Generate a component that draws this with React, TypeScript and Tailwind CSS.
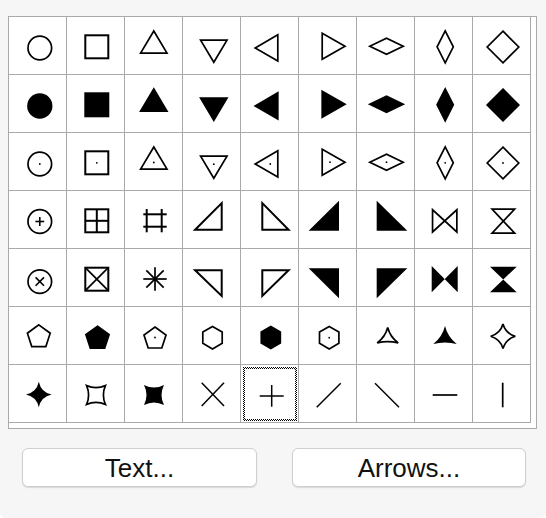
import React from "react";

type P = [number, number];
const pts = (a: P[]) => a.map((p) => `${p[0]},${p[1]}`).join(" ");
const SW = 1.7;

function regular(cx: number, cy: number, R: number, n: number, start: number): P[] {
  const out: P[] = [];
  for (let i = 0; i < n; i++) {
    const a = ((start + (360 / n) * i) * Math.PI) / 180;
    out.push([cx + R * Math.cos(a), cy + R * Math.sin(a)]);
  }
  return out;
}

function concavePts(p: P[], c: P, k: number) {
  const n = p.length;
  let d = `M${p[0][0]},${p[0][1]}`;
  for (let i = 0; i < n; i++) {
    const a = p[i];
    const b = p[(i + 1) % n];
    const mx = (a[0] + b[0]) / 2;
    const my = (a[1] + b[1]) / 2;
    const q: P = [c[0] + k * (mx - c[0]), c[1] + k * (my - c[1])];
    d += ` Q${q[0]},${q[1]} ${b[0]},${b[1]}`;
  }
  return d + " Z";
}

function concaveStar(cx: number, cy: number, R: number, n: number, start: number, k: number) {
  return concavePts(regular(cx, cy, R, n, start), [cx, cy], k);
}

function concaveSquare(x1: number, y1: number, x2: number, y2: number, inset: number) {
  const mx = (x1 + x2) / 2;
  const my = (y1 + y2) / 2;
  return `M${x1},${y1} Q${mx},${y1 + inset} ${x2},${y1} Q${x2 - inset},${my} ${x2},${y2} Q${mx},${y2 - inset} ${x1},${y2} Q${x1 + inset},${my} ${x1},${y1} Z`;
}

const Dot = ({ x, y }: { x: number; y: number }) => <circle cx={x} cy={y} r={0.9} fill="#000" />;

const Out = ({ p, w = SW }: { p: P[]; w?: number }) => (
  <polygon points={pts(p)} fill="none" stroke="#000" strokeWidth={w} strokeLinejoin="miter" strokeMiterlimit={10} />
);
const Fill = ({ p }: { p: P[] }) => (
  <polygon points={pts(p)} fill="#000" stroke="#000" strokeWidth={SW} strokeLinejoin="miter" strokeMiterlimit={10} />
);
const FillOnly = ({ p }: { p: P[] }) => <polygon points={pts(p)} fill="#000" />;
const Ln = ({ a, b, w = 1.6 }: { a: P; b: P; w?: number }) => (
  <line x1={a[0]} y1={a[1]} x2={b[0]} y2={b[1]} stroke="#000" strokeWidth={w} />
);

const triUp: P[] = [[28.8, 14], [15.6, 36.1], [42, 36.1]];
const triDown: P[] = [[17.6, 23.2], [44, 23.2], [30.8, 45.3]];
const triLeft: P[] = [[14.2, 31], [36.8, 17.8], [36.8, 44]];
const triRight: P[] = [[23.2, 16.2], [46, 29.2], [23.2, 42.2]];
const diaH: P[] = [[12.8, 29.2], [29.5, 21.2], [46.2, 29.2], [29.5, 37.2]];
const diaV: P[] = [[30.2, 13.8], [38.3, 29.8], [30.2, 45.8], [22.1, 29.8]];
const diaS: P[] = [[30, 14.2], [45.8, 30], [30, 45.8], [14.2, 30]];

const row0 = [
  <circle key="c" cx={30.8} cy={31} r={11.8} fill="none" stroke="#000" strokeWidth={SW} />,
  <rect key="r" x={18.3} y={18.3} width={23} height={23} fill="none" stroke="#000" strokeWidth={2} />,
  <Out key="a" p={triUp} />,
  <Out key="b" p={triDown} />,
  <Out key="c2" p={triLeft} />,
  <Out key="d" p={triRight} />,
  <Out key="e" p={diaH} />,
  <Out key="f" p={diaV} />,
  <Out key="g" p={diaS} />,
];

const row1 = [
  <circle key="c" cx={30.8} cy={31} r={11.8} fill="#000" stroke="#000" strokeWidth={SW} />,
  <rect key="r" x={18.3} y={18.3} width={23} height={23} fill="#000" stroke="#000" strokeWidth={2} />,
  <Fill key="a" p={triUp} />,
  <Fill key="b" p={triDown} />,
  <Fill key="c2" p={triLeft} />,
  <Fill key="d" p={triRight} />,
  <Fill key="e" p={diaH} />,
  <Fill key="f" p={diaV} />,
  <Fill key="g" p={diaS} />,
];

const dots: P[] = [
  [30.8, 31], [29.8, 29.8], [28.8, 29.5], [30.8, 31.2], [29.3, 31], [31, 29.2], [29.5, 29.2], [30.2, 29.8], [30, 30],
];
const row2 = row0.map((el, i) => (
  <g key={i}>
    {el}
    <Dot x={dots[i][0]} y={dots[i][1]} />
  </g>
));

const row3 = [
  <g key="0">
    <circle cx={30.8} cy={30.5} r={11.8} fill="none" stroke="#000" strokeWidth={SW} />
    <Ln a={[26.4, 30.5]} b={[35.2, 30.5]} w={1.6} />
    <Ln a={[30.8, 26.1]} b={[30.8, 34.9]} w={1.6} />
  </g>,
  <g key="1">
    <rect x={18.3} y={18.3} width={23} height={23} fill="none" stroke="#000" strokeWidth={2} />
    <Ln a={[29.8, 18.3]} b={[29.8, 41.3]} w={2} />
    <Ln a={[18.3, 29.8]} b={[41.3, 29.8]} w={2} />
  </g>,
  <g key="2">
    <Ln a={[21.7, 18]} b={[21.7, 41.3]} w={2} />
    <Ln a={[36.7, 18]} b={[36.7, 41.3]} w={2} />
    <Ln a={[18.3, 23.3]} b={[41.7, 23.3]} w={2} />
    <Ln a={[18.3, 35.7]} b={[41.7, 35.7]} w={2} />
  </g>,
  <Out key="3" w={2} p={[[12.1, 38.7], [38.7, 12.1], [38.7, 38.7]]} />,
  <Out key="4" w={2} p={[[21.3, 12.1], [21.3, 38.7], [47.6, 38.7]]} />,
  <FillOnly key="5" p={[[9.7, 39.7], [40, 9.7], [40, 39.7]]} />,
  <FillOnly key="6" p={[[19.7, 9.7], [19.7, 39.7], [50.3, 39.7]]} />,
  <path key="7" d="M17.55,18.75 L17.55,40.95 L41.85,18.75 L41.85,40.95 Z" fill="none" stroke="#000" strokeWidth={SW} strokeMiterlimit={10} />,
  <path key="8" d="M19.05,18.15 L41.65,18.15 L19.05,42.15 L41.65,42.15 Z" fill="none" stroke="#000" strokeWidth={SW} strokeMiterlimit={10} />,
];

const row4 = [
  <g key="0">
    <circle cx={30.8} cy={32.6} r={11.8} fill="none" stroke="#000" strokeWidth={SW} />
    <Ln a={[26.6, 28.4]} b={[35, 36.8]} w={1.6} />
    <Ln a={[35, 28.4]} b={[26.6, 36.8]} w={1.6} />
  </g>,
  <g key="1">
    <rect x={18.3} y={18.7} width={23} height={23} fill="none" stroke="#000" strokeWidth={2} />
    <Ln a={[18.3, 18.7]} b={[41.3, 41.7]} w={1.7} />
    <Ln a={[41.3, 18.7]} b={[18.3, 41.7]} w={1.7} />
  </g>,
  <g key="2">
    <Ln a={[30, 18.3]} b={[30, 41.7]} w={1.7} />
    <Ln a={[18.3, 30]} b={[41.7, 30]} w={1.7} />
    <Ln a={[21.3, 21.3]} b={[38.7, 38.7]} w={1.7} />
    <Ln a={[38.7, 21.3]} b={[21.3, 38.7]} w={1.7} />
  </g>,
  <Out key="3" w={2} p={[[12.1, 21.3], [38.7, 21.3], [38.7, 46.9]]} />,
  <Out key="4" w={2} p={[[21.3, 21.3], [47.6, 21.3], [21.3, 46.9]]} />,
  <FillOnly key="5" p={[[9.7, 19.3], [40, 19.3], [40, 49.3]]} />,
  <FillOnly key="6" p={[[19.7, 19.3], [50.3, 19.3], [19.7, 49.3]]} />,
  <path key="7" d="M16.7,17 L42.7,43.3 L42.7,17 L16.7,43.3 Z" fill="#000" />,
  <path key="8" d="M17,17.7 L43.7,17.7 L17,43.3 L43.7,43.3 Z" fill="#000" />,
];

const row5 = [
  <Out key="0" p={regular(29.8, 29.9, 12, 5, -90)} />,
  <Fill key="1" p={regular(30.5, 31.4, 12.2, 5, -90)} />,
  <g key="2">
    <Out p={regular(30, 31.6, 11.6, 5, -90)} />
    <Dot x={30} y={30.5} />
  </g>,
  <Out key="3" p={regular(29.5, 30.7, 11.2, 6, -90)} />,
  <Fill key="4" p={regular(29.8, 30.5, 11, 6, -90)} />,
  <g key="5">
    <Out p={regular(30.2, 30.7, 11.2, 6, -90)} />
    <Dot x={30.2} y={30.7} />
  </g>,
  <path
    key="6"
    d={concavePts([[30.7, 20.5], [41.2, 36], [20.2, 36]], [30.7, 31], 0.45)}
    fill="none"
    stroke="#000"
    strokeWidth={SW}
    strokeLinejoin="miter"
    strokeMiterlimit={3}
  />,
  <path key="7" d={concavePts([[30, 19], [41.7, 37], [18.3, 37]], [30, 31.2], 0.45)} fill="#000" />,
  <path key="8" d={concaveStar(30, 29.3, 12.3, 4, -90, 0.45)} fill="none" stroke="#000" strokeWidth={SW} strokeLinejoin="miter" strokeMiterlimit={3} />,
];

const row6 = [
  <path key="0" d={concaveStar(29.8, 29.5, 12.8, 4, -90, 0.35)} fill="#000" />,
  <path key="1" d={concaveSquare(19.6, 20.6, 38.4, 39.4, 4)} fill="none" stroke="#000" strokeWidth={SW} strokeMiterlimit={10} />,
  <path key="2" d={concaveSquare(19, 20, 39, 40, 5)} fill="#000" />,
  <g key="3">
    <Ln a={[18.7, 17.7]} b={[41, 41]} w={1.5} />
    <Ln a={[41, 17.7]} b={[18.7, 41]} w={1.5} />
  </g>,
  <g key="4">
    <defs>
      <pattern id="chk" width="2" height="2" patternUnits="userSpaceOnUse">
        <rect width="2" height="2" fill="#fff" />
        <rect width="1" height="1" fill="#000" />
        <rect x="1" y="1" width="1" height="1" fill="#000" />
      </pattern>
    </defs>
    <rect x={3} y={3} width={52} height={52} fill="none" stroke="url(#chk)" strokeWidth={2} />
    <Ln a={[18.7, 31]} b={[42.7, 31]} w={1.5} />
    <Ln a={[30.7, 20]} b={[30.7, 41.7]} w={1.5} />
  </g>,
  <Ln key="5" a={[17.7, 42.3]} b={[41.7, 18.3]} w={1.5} />,
  <Ln key="6" a={[18, 18.3]} b={[42, 42.3]} w={1.5} />,
  <Ln key="7" a={[17.7, 30]} b={[42.3, 30]} w={1.7} />,
  <Ln key="8" a={[29.7, 17.7]} b={[29.7, 42.3]} w={1.7} />,
];

const rows = [row0, row1, row2, row3, row4, row5, row6];

export default function App() {
  return (
    <div className="w-[546px] h-[518px] bg-[#f6f6f6] rounded-b-[6px] pt-[16px] pl-[8px] font-['Liberation_Sans',Arial,sans-serif]">
      <div className="w-[529px] h-[413px] border border-[#aaaaaa] bg-white">
        <div className="grid grid-cols-[repeat(9,58px)] w-fit">
          {rows.flatMap((r, ri) =>
            r.map((el, ci) => (
              <div key={`${ri}-${ci}`} className="w-[58px] h-[58px] border-r border-b border-[#aaaaaa]">
                <svg width={57} height={57} viewBox="0 0 57 57" className="block">
                  {el}
                </svg>
              </div>
            ))
          )}
        </div>
      </div>
      <div className="mt-[19px] pl-[14px] flex gap-[35px]">
        <button className="w-[235px] h-[39px] bg-white border border-[#cfcfcf] rounded-[6px] shadow-[0_1px_1px_rgba(0,0,0,0.12)] text-[26px] text-[#111] leading-none flex items-center justify-center">
          Text...
        </button>
        <button className="w-[234px] h-[39px] bg-white border border-[#cfcfcf] rounded-[6px] shadow-[0_1px_1px_rgba(0,0,0,0.12)] text-[26px] text-[#111] leading-none flex items-center justify-center">
          Arrows...
        </button>
      </div>
    </div>
  );
}
